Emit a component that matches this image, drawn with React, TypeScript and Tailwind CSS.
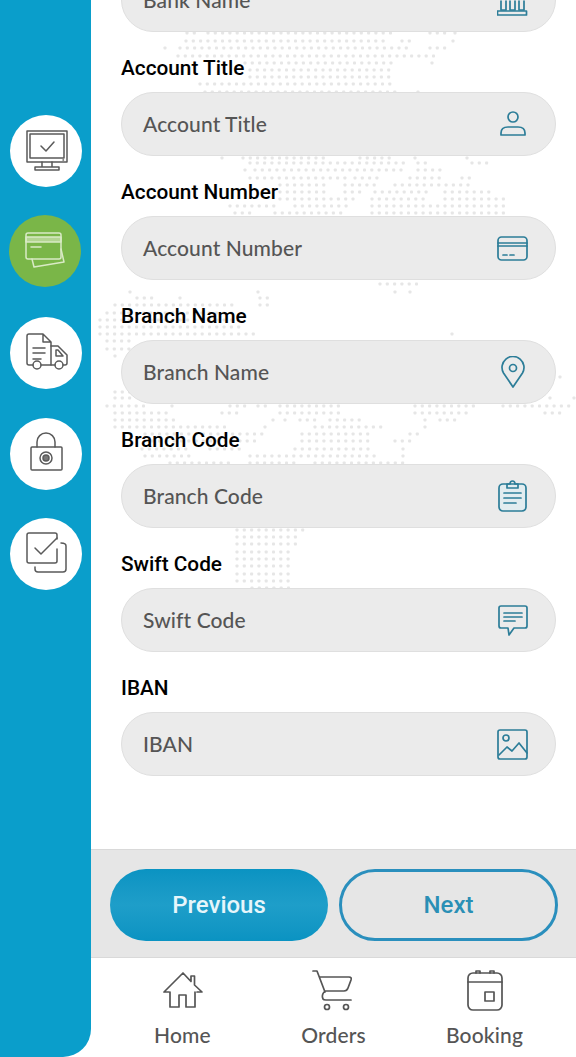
import type { ReactNode } from 'react'

const sideStroke = '#5a5a5a'
const fieldStroke = '#2c7d98'

// Dot map rows: [y, x-from, x-to, x-from, x-to, ...]
const mapRows: number[][] = [
  [33, 187, 197, 208, 397, 430, 445, 455, 455],
  [41, 186, 390, 402, 415, 453, 453],
  [48, 165, 165, 180, 412, 430, 448],
  [56, 178, 440],
  [63, 245, 395, 432, 432],
  [70, 250, 390],
  [77, 250, 390],
  [84, 200, 390],
  [92, 205, 395, 418, 418],
  [158, 222, 222, 243, 325, 360, 395, 415, 415, 467, 467],
  [163, 250, 405, 418, 428, 472, 490],
  [170, 245, 245, 255, 405, 418, 440],
  [178, 250, 350, 355, 380, 410, 445, 462, 470],
  [185, 280, 325, 345, 380, 395, 475],
  [192, 280, 330, 345, 360, 375, 430, 445, 495],
  [199, 280, 355, 372, 430, 445, 505],
  [206, 230, 275, 295, 350, 372, 505],
  [213, 235, 250, 275, 348, 372, 510],
  [284, 380, 418],
  [292, 130, 135, 258, 258, 395, 395, 410, 410],
  [298, 137, 152, 180, 180, 260, 268],
  [305, 115, 232, 260, 268],
  [313, 107, 232],
  [320, 100, 240],
  [327, 100, 245],
  [334, 100, 255, 452, 452],
  [341, 107, 135],
  [349, 107, 135],
  [356, 115, 120],
  [377, 560, 560],
  [392, 115, 130],
  [398, 115, 130, 550, 550, 574, 574],
  [406, 107, 145, 172, 172, 230, 245, 258, 270, 280, 340, 415, 475, 503, 570],
  [413, 115, 170, 222, 238, 280, 345, 415, 470, 545, 560],
  [420, 115, 175, 273, 273, 285, 285, 300, 320, 330, 360, 425, 425, 440, 455],
  [427, 115, 230, 265, 265, 315, 385, 425, 425],
  [434, 145, 265, 302, 375, 410, 420],
  [441, 145, 260, 302, 375, 395, 412],
  [449, 142, 190, 210, 240, 295, 375, 403, 403],
  [456, 145, 195, 250, 375, 403, 403],
  [463, 170, 230, 250, 300, 315, 405],
  [530, 237, 305],
  [537, 237, 297],
  [544, 237, 297],
  [552, 237, 292],
  [559, 237, 292],
  [566, 237, 292],
  [574, 237, 292],
  [581, 237, 292],
  [588, 252, 292],
]

function DotMap() {
  const dots: ReactNode[] = []
  mapRows.forEach(([y, ...spans]) => {
    for (let i = 0; i < spans.length; i += 2) {
      for (let x = spans[i]; x <= spans[i + 1]; x += 7.3) {
        dots.push(<rect key={`${y}-${i}-${x}`} x={x - 91 - 1.5} y={y - 1.5} width={3} height={3} rx={0.8} fill="#e6e6e6" />)
      }
    }
  })
  return (
    <svg className="absolute left-0 top-0 h-[600px] w-[485px]" viewBox="0 0 485 600">
      {dots}
    </svg>
  )
}

function SideIcon({ children, active, className }: { children: ReactNode; active?: boolean; className?: string }) {
  return (
    <div
      className={`flex h-[72px] w-[72px] items-center justify-center rounded-full ${active ? 'bg-[#7ab648]' : 'bg-white'} ${className ?? ''}`}
    >
      <svg width="48" height="48" viewBox="0 0 48 48" fill="none" stroke={active ? '#d9eac5' : sideStroke} strokeWidth="1.5" strokeLinecap="round" strokeLinejoin="round">
        {children}
      </svg>
    </div>
  )
}

function FieldIcon({ children }: { children: ReactNode }) {
  return (
    <svg width="32" height="32" viewBox="0 0 32 32" fill="none" stroke={fieldStroke} strokeWidth="1.7" strokeLinecap="round" strokeLinejoin="round">
      {children}
    </svg>
  )
}

function Field({ label, icon }: { label?: string; icon: ReactNode }) {
  return (
    <div className="flex flex-col">
      {label && <div className="mb-3 font-['Roboto',sans-serif] text-[20.8px] font-medium leading-6 text-black">{label}</div>}
      <div className="flex h-16 items-center justify-between rounded-full border border-[#dfdfdf] bg-[#ebebeb] pl-[21px] pr-[26px]">
        <span className="font-['Lato',sans-serif] text-[21px] font-medium tracking-[0.1px] text-[#555555]">{label ?? 'Bank Name'}</span>
        {icon}
      </div>
    </div>
  )
}

function NavItem({ label, children }: { label: string; children: ReactNode }) {
  return (
    <div className="flex flex-col items-center">
      <svg width="44" height="44" viewBox="0 0 44 44" fill="none" stroke="#555555" strokeWidth="1.7" strokeLinecap="round" strokeLinejoin="round">
        {children}
      </svg>
      <span className="mt-[11px] font-['Lato',sans-serif] text-[21px] font-medium leading-6 tracking-[0.15px] text-[#555555]">{label}</span>
    </div>
  )
}

export default function App() {
  return (
    <div className="flex h-[1057px] w-[576px] overflow-hidden bg-white">
      {/* Step rail */}
      <aside className="flex w-[91px] shrink-0 flex-col gap-[29px] rounded-br-[28px] bg-[#0a9ecb] pl-[10px] pt-[115px]">
        <SideIcon>
          <rect x="5" y="4" width="40" height="31" />
          <rect x="8" y="7" width="34" height="24" />
          <path d="M19 19l5 5 8-9M41 33h.5M20 35v5M30 35v5M13 43h24v-3H13z" />
        </SideIcon>
        <SideIcon active className="mb-px -ml-px -mt-px">
          <rect x="5" y="6" width="35" height="26" rx="2" />
          <path d="M5 10h35v5H5z" fill="#d9eac5" fillOpacity="0.6" />
          <path d="M10 20h10M40 22l3 13-30 5-2-8" />
        </SideIcon>
        <SideIcon>
          <path d="M11 36H7q-2 0-2-2V7q0-2 2-2h14l8 8v23H19M21 5v8h8" />
          <path d="M11 19h12M11 24h12M11 30h8" />
          <path d="M29 17h7l9 9v8q0 2-2 2h-2M33 36h-4M34 21h2l5 6h-7z" />
          <circle cx="15" cy="36" r="4" />
          <circle cx="37" cy="36" r="4" />
        </SideIcon>
        <SideIcon>
          <rect x="9" y="17" width="31" height="23" rx="1" />
          <path d="M15 17V12a9 9 0 0 1 18 0v5" />
          <circle cx="24" cy="28" r="6" />
          <circle cx="24" cy="28" r="3" fill="#777777" />
        </SideIcon>
        <SideIcon className="-mt-px">
          <path d="M35 9V5q0-2-2-2H7q-2 0-2 2v26q0 2 2 2h26q2 0 2-2V19" />
          <path d="M13 18l6 6 16-16" />
          <path d="M39 13q5 0 5 3v23q0 3-3 3H16q-3 0-3-3v-2" />
        </SideIcon>
      </aside>

      <div className="flex min-w-0 flex-1 flex-col">
        {/* Form, scrolled so that the first field is cut off by the top edge */}
        <main className="relative flex-1 overflow-hidden">
          <DotMap />
          <div className="relative -mt-[32px] flex flex-col gap-6 pl-[30px] pr-5">
            <Field
              icon={
                <FieldIcon>
                  <rect x="0.500" y="27" width="29" height="4" />
                  <path d="M4 17v9h5v-9M13 17v9h5v-9M22 17v9h5v-9" />
                </FieldIcon>
              }
            />
            <Field
              label="Account Title"
              icon={
                <FieldIcon>
                  <circle cx="16" cy="9" r="5" />
                  <path d="M4 27v-2q0-6 7-6h10q7 0 7 6v2z" />
                </FieldIcon>
              }
            />
            <Field
              label="Account Number"
              icon={
                <FieldIcon>
                  <rect x="1" y="5" width="29" height="23" rx="3.500" />
                  <path d="M1 11h29M1 14h29M6 23h4M13 23h4" />
                </FieldIcon>
              }
            />
            <Field
              label="Branch Name"
              icon={
                <FieldIcon>
                  <path d="M16 31L6.500 17a11 11 0 1 1 19 0z" />
                  <circle cx="16" cy="12" r="3.500" />
                </FieldIcon>
              }
            />
            <Field
              label="Branch Code"
              icon={
                <FieldIcon>
                  <rect x="2" y="4" width="27" height="27" rx="4" fill="#e2edf0" />
                  <path d="M10 8V4h3q0-3 2.500-3T18 4h3v4zM7 13h17M7 18h17M7 23h12" />
                </FieldIcon>
              }
            />
            <Field
              label="Swift Code"
              icon={
                <FieldIcon>
                  <path d="M4 2h24q2 0 2 2v18q0 2-2 2H17l-5 7-1-7H4q-2 0-2-2V4q0-2 2-2z" />
                  <path d="M7 9h18M7 13h18M7 17h11" />
                </FieldIcon>
              }
            />
            <Field
              label="IBAN"
              icon={
                <FieldIcon>
                  <rect x="1" y="2" width="29" height="29" rx="2" />
                  <circle cx="9" cy="10" r="3" />
                  <path d="M2 27l8-8 5 4 7-8 8 10" />
                </FieldIcon>
              }
            />
          </div>
        </main>

        {/* Previous / Next */}
        <div className="flex h-[109px] items-center gap-[11px] border-y border-[#d9d9d9] bg-[#e6e6e6] pl-[19px] pt-[3px]">
          <button className="flex h-[72px] w-[218px] items-center justify-center rounded-full bg-gradient-to-b from-[#0a93c2] via-[#1e9ec9] to-[#0a93c2] font-['Roboto',sans-serif] text-[24px] font-medium text-[#e6f6fb]">
            Previous
          </button>
          <button className="flex h-[72px] w-[219px] items-center justify-center rounded-full border-[3px] border-[#2a8fbd] font-['Roboto',sans-serif] text-[24px] font-medium text-[#2a8fb5]">
            Next
          </button>
        </div>

        {/* Bottom navigation */}
        <nav className="grid h-[99px] grid-cols-[151px_151px_151px] pl-4 pt-[10px]">
          <NavItem label="Home">
            <path d="M3 24L22 5l8 8.500V8h3.500v9L41 24h-5M8 24H3M9 24v15h9V27h7v12h9V24" />
          </NavItem>
          <NavItem label="Orders">
            <path d="M1 3h4l8 21M8 9h29q3 0 2 3l-3 8q-1 3-4 3H13q-4 4-2 8q.5 1 3 1h25" />
            <circle cx="15" cy="39" r="2.500" />
            <circle cx="34" cy="39" r="2.500" />
          </NavItem>
          <NavItem label="Booking">
            <rect x="5" y="5" width="34" height="37" rx="5" />
            <path d="M5 14h34M13 5V3h4v2M27 5V3h4v2" />
            <rect x="22" y="24" width="9" height="9" />
          </NavItem>
        </nav>
      </div>
    </div>
  )
}
